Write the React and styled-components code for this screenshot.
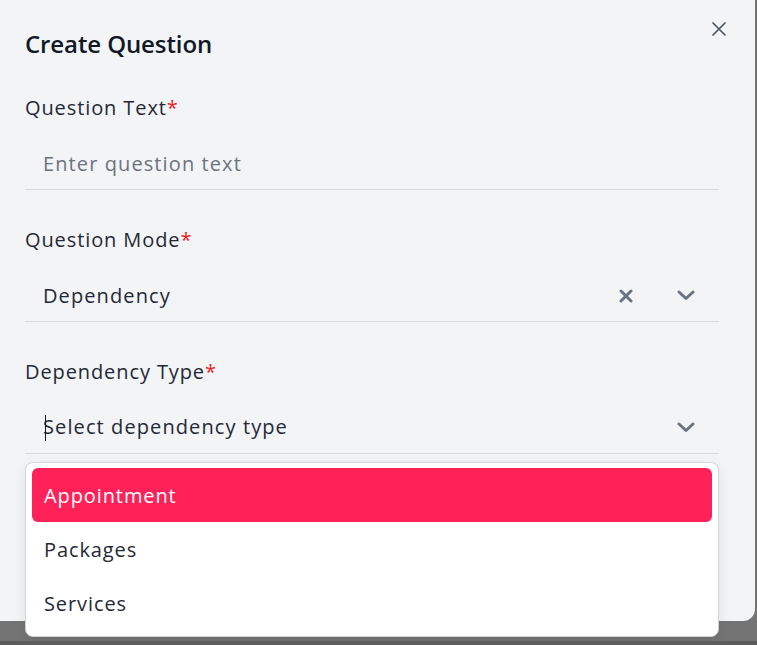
import React from "react";
import styled, { createGlobalStyle } from "styled-components";

const GlobalStyle = createGlobalStyle`
  html, body {
    margin: 0;
    padding: 0;
    background: #747474;
  }
  body {
    font-family: "Open Sans", "Noto Sans", Arial, sans-serif;
    -webkit-font-smoothing: antialiased;
  }
  * { box-sizing: border-box; }
`;

const Backdrop = styled.div`
  width: 757px;
  height: 645px;
  overflow: hidden;
  background: #747474;
  border-bottom: 4px solid #5c5c5c;
`;

const Modal = styled.div`
  position: relative;
  width: 755px;
  height: 621px;
  background: #f3f4f6;
  border-bottom-right-radius: 12px;
  padding: 28px 36px 0 25px;
`;

const CloseButton = styled.button`
  position: absolute;
  top: 22px;
  right: 29px;
  width: 14px;
  height: 14px;
  padding: 0;
  border: 0;
  background: transparent;
  color: #4b5563;
  display: flex;
  cursor: pointer;
`;

const Title = styled.h2`
  margin: 0 0 34px;
  font-size: 24px;
  line-height: 32px;
  font-weight: 600;
  color: #111827;
  letter-spacing: -0.1px;
`;

const Form = styled.div`
  display: flex;
  flex-direction: column;
  gap: 36px;
`;

const Field = styled.div`
  position: relative;
  display: flex;
  flex-direction: column;
`;

const Label = styled.label`
  font-size: 20px;
  line-height: 28px;
  color: #1f2937;
  letter-spacing: 0.9px;
`;

const Required = styled.span`
  color: #ee1c25;
`;

const InputRow = styled.div`
  margin-top: 16px;
  height: 52px;
  display: flex;
  align-items: center;
  padding-left: 18px;
  padding-right: 13px;
  border-bottom: 1px solid #d8dbe0;
`;

const Value = styled.span`
  flex: 1;
  font-size: 20px;
  line-height: 28px;
  letter-spacing: 1.1px;
  color: ${(p) => (p.$placeholder ? "#6b7280" : "#1f2937")};
  white-space: nowrap;
`;

const Caret = styled.span`
  display: inline-block;
  width: 1px;
  height: 26px;
  background: #111827;
  vertical-align: middle;
  margin-left: 2px;
  margin-right: -3px;
  position: relative;
  top: -1px;
`;

const Icons = styled.div`
  display: flex;
  align-items: center;
  gap: 20px;
`;

const IconSlot = styled.span`
  width: 40px;
  height: 40px;
  display: flex;
  align-items: center;
  justify-content: center;
  color: #6b7280;
`;

const Menu = styled.ul`
  position: absolute;
  top: calc(100% + 8px);
  left: 0;
  right: 0;
  margin: 0;
  list-style: none;
  padding: 5px 6px 6px;
  background: #ffffff;
  border: 1px solid #d1d5db;
  border-radius: 8px;
  box-shadow: 0 4px 14px rgba(0, 0, 0, 0.08);
  z-index: 10;
`;

const MenuItem = styled.li`
  height: 54px;
  display: flex;
  align-items: center;
  padding-left: 12px;
  border-radius: 6px;
  font-size: 20px;
  letter-spacing: 0.9px;
  background: ${(p) => (p.$active ? "#ff2157" : "transparent")};
  color: ${(p) => (p.$active ? "#ffffff" : "#1f2937")};
`;

const CloseIcon = () => (
  <svg width="14" height="14" viewBox="0 0 14 14" fill="none">
    <path d="M1 1L13 13M13 1L1 13" stroke="currentColor" strokeWidth="1.7" strokeLinecap="round" />
  </svg>
);

const ClearIcon = () => (
  <svg width="14" height="14" viewBox="0 0 14 14" fill="none">
    <path d="M2 2L12 12M12 2L2 12" stroke="currentColor" strokeWidth="3" strokeLinecap="round" />
  </svg>
);

const Chevron = () => (
  <svg width="18" height="11" viewBox="0 0 18 11" fill="none">
    <path d="M2 2L9 8.5L16 2" stroke="currentColor" strokeWidth="3" strokeLinecap="round" strokeLinejoin="round" />
  </svg>
);

export default function App() {
  const options = ["Appointment", "Packages", "Services"];
  return (
    <>
      <GlobalStyle />
      <Backdrop>
        <Modal>
          <CloseButton aria-label="Close">
            <CloseIcon />
          </CloseButton>
          <Title>Create Question</Title>
          <Form>
            <Field>
              <Label>
                Question Text<Required>*</Required>
              </Label>
              <InputRow>
                <Value $placeholder>Enter question text</Value>
              </InputRow>
            </Field>
            <Field>
              <Label>
                Question Mode<Required>*</Required>
              </Label>
              <InputRow>
                <Value>Dependency</Value>
                <Icons>
                  <IconSlot>
                    <ClearIcon />
                  </IconSlot>
                  <IconSlot>
                    <Chevron />
                  </IconSlot>
                </Icons>
              </InputRow>
            </Field>
            <Field>
              <Label>
                Dependency Type<Required>*</Required>
              </Label>
              <InputRow>
                <Value $placeholder={false}>
                  <Caret />
                  Select dependency type
                </Value>
                <Icons>
                  <IconSlot>
                    <Chevron />
                  </IconSlot>
                </Icons>
              </InputRow>
              <Menu>
                {options.map((o, i) => (
                  <MenuItem key={o} $active={i === 0}>
                    {o}
                  </MenuItem>
                ))}
              </Menu>
            </Field>
          </Form>
        </Modal>
      </Backdrop>
    </>
  );
}
